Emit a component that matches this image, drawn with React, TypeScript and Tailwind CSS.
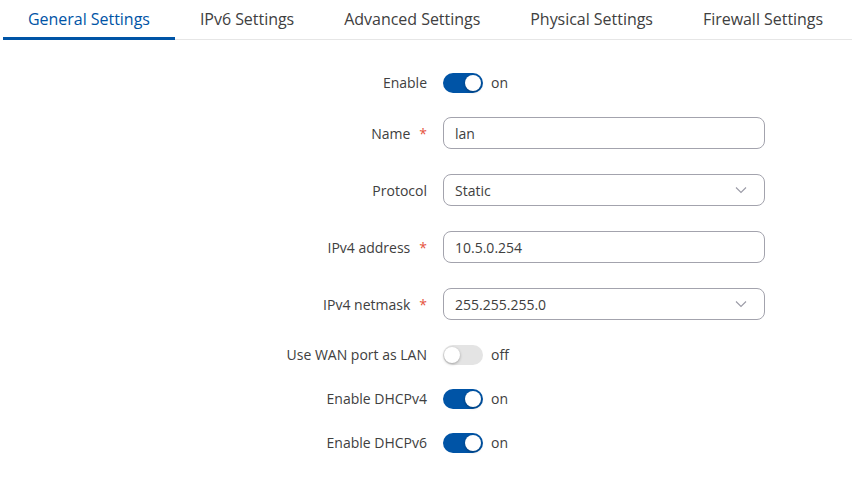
import React from "react";

const tabs = ["General Settings", "IPv6 Settings", "Advanced Settings", "Physical Settings", "Firewall Settings"];

function Toggle({ on }: { on: boolean }) {
  return (
    <div className="flex items-center h-[19px]">
      <div
        className={
          "relative w-[40px] h-[20px] rounded-full " + (on ? "bg-[#0054a6]" : "bg-[#e4e4e4]")
        }
      >
        <div
          className={
            "absolute top-[2px] w-[16px] h-[16px] rounded-full bg-white shadow-[0_1px_3px_rgba(0,0,0,0.3)] " +
            (on ? "left-[22px]" : "left-[1px]")
          }
        />
      </div>
      <span className="ml-[8px] text-[14px] leading-[19px] text-[#404040]">{on ? "on" : "off"}</span>
    </div>
  );
}

function Chevron() {
  return (
    <svg width="12" height="8" viewBox="0 0 12 8" fill="none">
      <path d="M1 1.5 L6 6.5 L11 1.5" stroke="#9a9aa6" strokeWidth="1.1" />
    </svg>
  );
}

function Field({ value, select }: { value: string; select?: boolean }) {
  return (
    <div className="w-[322px] h-[32px] border border-[#a3a3ad] rounded-[8px] flex items-center justify-between pl-[11px] pr-[17px] text-[14px] leading-[19px] text-[#404040]">
      <span>{value}</span>
      {select && <Chevron />}
    </div>
  );
}

function Row({ label, req, children }: { label: string; req?: boolean; children: React.ReactNode }) {
  return (
    <div className="flex items-center leading-[19px]">
      <div className="w-[427px] flex justify-end items-center text-[14px] leading-[19px] text-[#404040]">
        <span>{label}</span>
        {req && <span className="ml-[9px] text-[#e5533c]">*</span>}
      </div>
      <div className="ml-[16px]">{children}</div>
    </div>
  );
}

export default function App() {
  return (
    <div className="w-[852px] h-[479px] bg-white" style={{ fontFamily: '"Open Sans", sans-serif' }}>
      <div className="ml-[3px] flex border-b border-[#e6e6e6] h-[40px]">
        {tabs.map((t, i) => (
          <div
            key={t}
            className={
              "px-[25px] pt-[7px] pb-[6px] text-[16px] leading-[24px] tracking-[-0.03px] border-b-[3px] -mb-px whitespace-nowrap " +
              (i === 0 ? "border-[#0054a6] text-[#0054a6]" : "border-transparent text-[#404040]")
            }
          >
            {t}
          </div>
        ))}
      </div>
      <div className="pt-[33px] flex flex-col gap-[25px]">
        <Row label="Enable">
          <Toggle on />
        </Row>
        <Row label="Name" req>
          <Field value="lan" />
        </Row>
        <Row label="Protocol">
          <Field value="Static" select />
        </Row>
        <Row label="IPv4 address" req>
          <Field value="10.5.0.254" />
        </Row>
        <Row label="IPv4 netmask" req>
          <Field value="255.255.255.0" select />
        </Row>
        <Row label="Use WAN port as LAN">
          <Toggle on={false} />
        </Row>
        <Row label="Enable DHCPv4">
          <Toggle on />
        </Row>
        <Row label="Enable DHCPv6">
          <Toggle on />
        </Row>
      </div>
    </div>
  );
}
